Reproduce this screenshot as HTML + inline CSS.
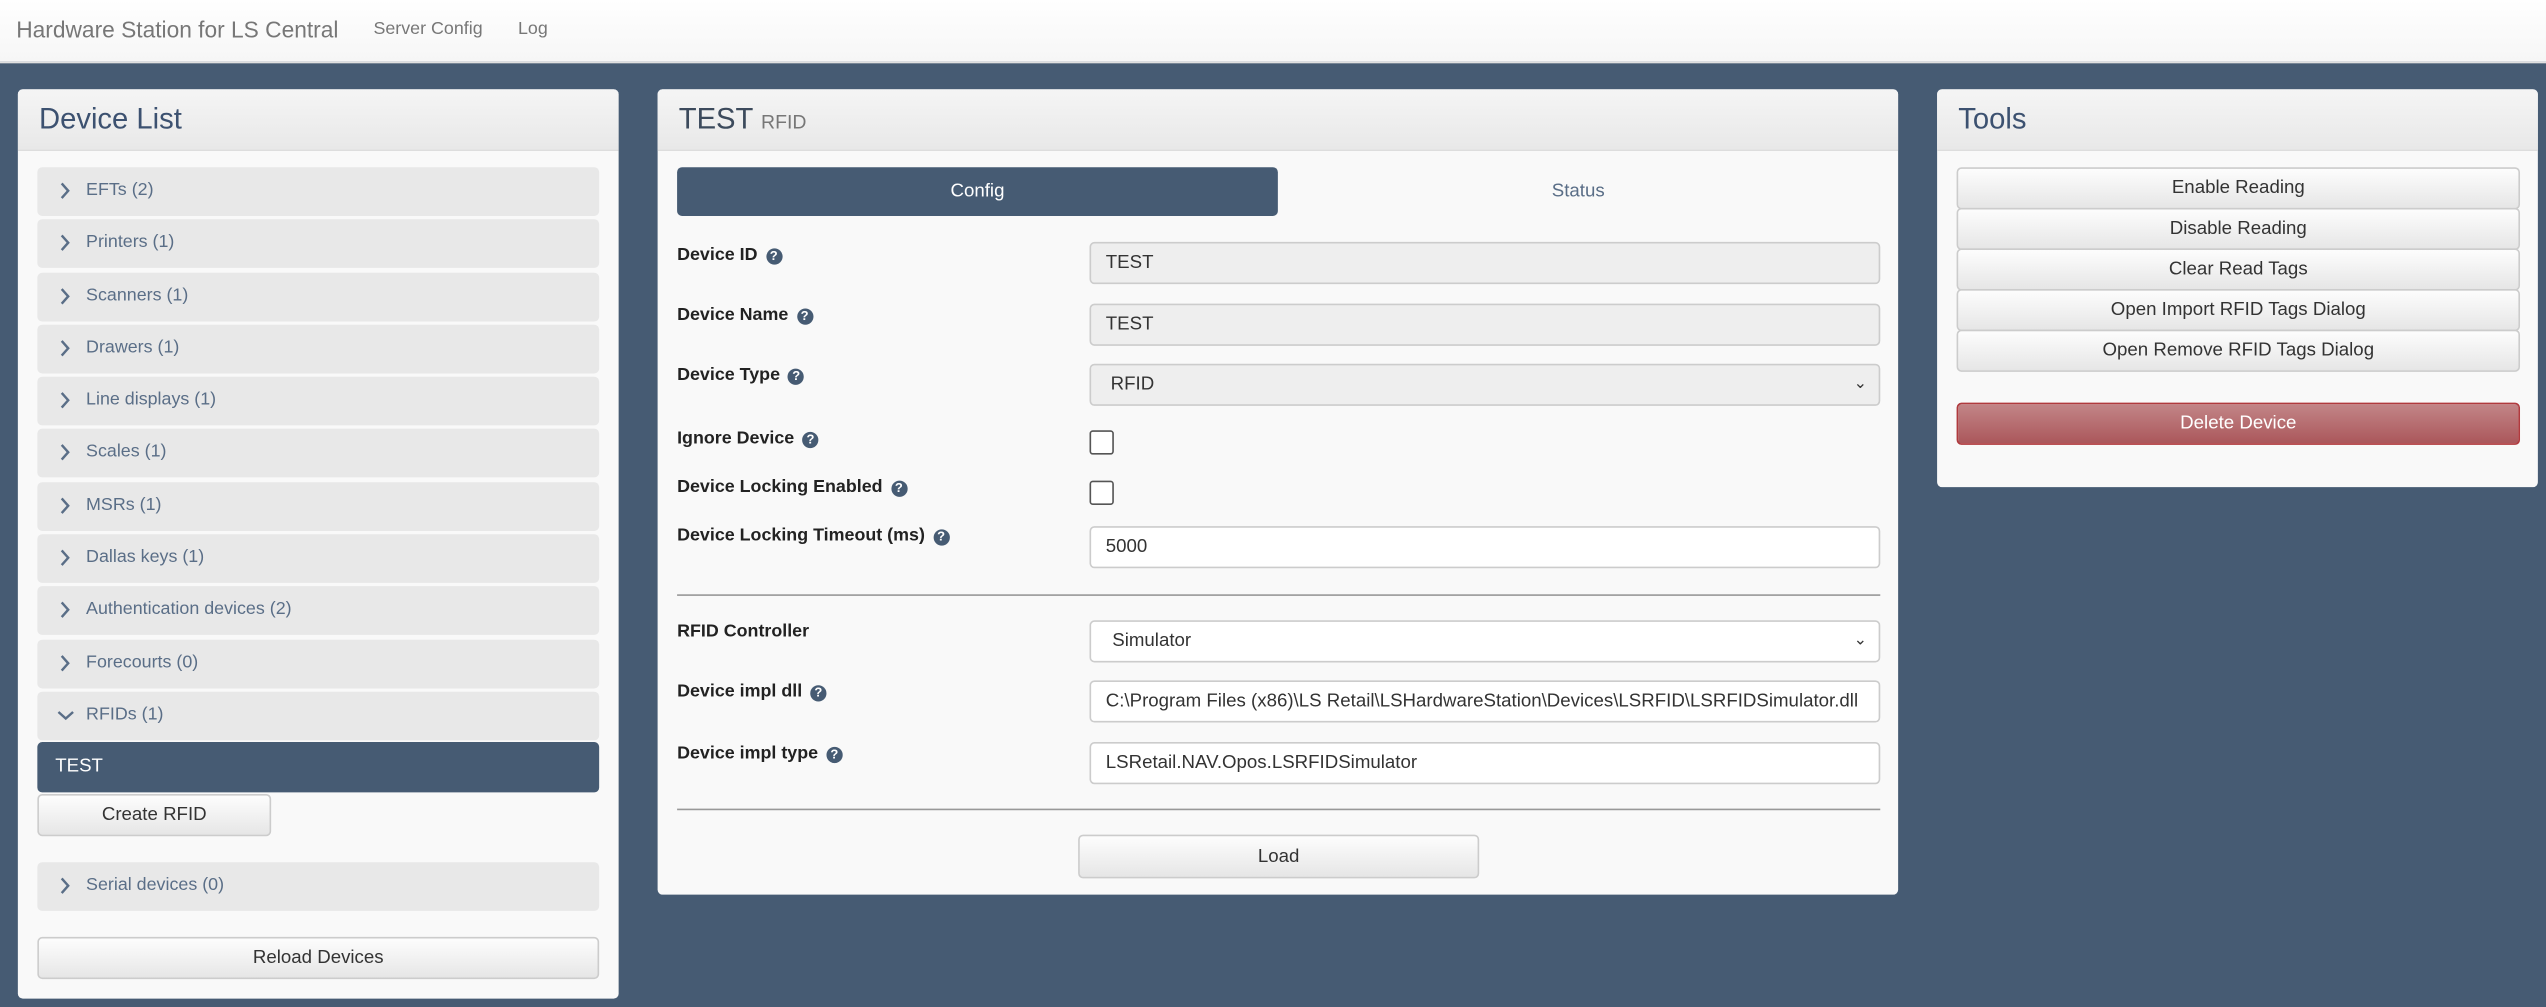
<!DOCTYPE html>
<html><head><meta charset="utf-8"><style>
html,body{margin:0;padding:0;width:2546px;height:1006px;overflow:hidden;background:#465b73;}
#w{position:absolute;left:0;top:0;width:1568px;height:620px;transform:scale(1.62372);transform-origin:0 0;font-family:"Liberation Sans",Arial,sans-serif;background:#465b73;}
.a{position:absolute;white-space:nowrap;}
.nav{left:0;top:0;width:1568px;height:38px;background:linear-gradient(#fff,#f6f6f6);border-bottom:1px solid #e0e0e0;}
.panel{background:#f9f9f9;border-radius:3px;}
.ph{position:absolute;left:0;top:0;right:0;height:37px;background:linear-gradient(#f5f5f5,#e8e8e8);border-bottom:1px solid #ddd;border-radius:3px 3px 0 0;}
.ph span{position:absolute;left:13px;top:8px;font-size:18px;color:#3c5170;}
.item{left:23px;width:346px;height:30px;background:#e8e8e8;border-radius:3px;font-size:11px;color:#5a6e87;}
.item .t{position:absolute;left:30px;top:8px;}
.item svg{position:absolute;left:13px;top:9px;}
.btn{background:linear-gradient(#fdfdfd,#e6e6e6);border:1px solid #ccc;border-radius:3px;box-sizing:border-box;font-size:11.5px;color:#333;text-align:center;}
.lbl{left:417px;font-size:11px;font-weight:bold;color:#222;}
.q{display:inline-block;width:10px;height:10px;border-radius:50%;background:#465b73;color:#fff;font-size:8px;line-height:10px;text-align:center;margin-left:5px;vertical-align:0px;}
.in{left:671px;width:487px;height:26px;box-sizing:border-box;border:1px solid #ccc;border-radius:3px;background:#fff;font-size:11.5px;color:#333;padding:6px 0 0 9px;overflow:hidden;}
.dis{background:#eee;}
.cb{left:671px;width:15px;height:15px;box-sizing:border-box;border:1px solid #555;border-radius:2px;background:#fff;}
.car{position:absolute;right:7px;top:6px;font-size:10px;}
</style></head><body><div id="w">
<div class="a nav"></div>
<div class="a" style="left:10px;top:10px;font-size:14px;color:#777">Hardware Station for LS Central</div>
<div class="a" style="left:230px;top:12px;font-size:11px;color:#777">Server Config</div>
<div class="a" style="left:319px;top:12px;font-size:11px;color:#777">Log</div>

<div class="a panel" style="left:11px;top:55px;width:370px;height:560px"><div class="ph"><span>Device List</span></div></div>
<div class="a item" style="top:103px"><svg width="8" height="11"><path d="M2 1l4 4.5L2 10" fill="none" stroke="#5a6e87" stroke-width="1.5"/></svg><span class="t">EFTs (2)</span></div>
<div class="a item" style="top:135px"><svg width="8" height="11"><path d="M2 1l4 4.5L2 10" fill="none" stroke="#5a6e87" stroke-width="1.5"/></svg><span class="t">Printers (1)</span></div>
<div class="a item" style="top:168px"><svg width="8" height="11"><path d="M2 1l4 4.5L2 10" fill="none" stroke="#5a6e87" stroke-width="1.5"/></svg><span class="t">Scanners (1)</span></div>
<div class="a item" style="top:200px"><svg width="8" height="11"><path d="M2 1l4 4.5L2 10" fill="none" stroke="#5a6e87" stroke-width="1.5"/></svg><span class="t">Drawers (1)</span></div>
<div class="a item" style="top:232px"><svg width="8" height="11"><path d="M2 1l4 4.5L2 10" fill="none" stroke="#5a6e87" stroke-width="1.5"/></svg><span class="t">Line displays (1)</span></div>
<div class="a item" style="top:264px"><svg width="8" height="11"><path d="M2 1l4 4.5L2 10" fill="none" stroke="#5a6e87" stroke-width="1.5"/></svg><span class="t">Scales (1)</span></div>
<div class="a item" style="top:297px"><svg width="8" height="11"><path d="M2 1l4 4.5L2 10" fill="none" stroke="#5a6e87" stroke-width="1.5"/></svg><span class="t">MSRs (1)</span></div>
<div class="a item" style="top:329px"><svg width="8" height="11"><path d="M2 1l4 4.5L2 10" fill="none" stroke="#5a6e87" stroke-width="1.5"/></svg><span class="t">Dallas keys (1)</span></div>
<div class="a item" style="top:361px"><svg width="8" height="11"><path d="M2 1l4 4.5L2 10" fill="none" stroke="#5a6e87" stroke-width="1.5"/></svg><span class="t">Authentication devices (2)</span></div>
<div class="a item" style="top:394px"><svg width="8" height="11"><path d="M2 1l4 4.5L2 10" fill="none" stroke="#5a6e87" stroke-width="1.5"/></svg><span class="t">Forecourts (0)</span></div>
<div class="a item" style="top:426px"><svg width="11" height="8" style="left:12px;top:11px"><path d="M1 1.5l4.5 4 4.5-4" fill="none" stroke="#5a6e87" stroke-width="1.5"/></svg><span class="t">RFIDs (1)</span></div>
<div class="a" style="left:23px;top:457px;width:346px;height:31px;background:#465b73;border-radius:3px;color:#fff;font-size:11.5px"><span style="position:absolute;left:11px;top:9px">TEST</span></div>
<div class="a btn" style="left:23px;top:489px;width:144px;height:26px;padding-top:6px">Create RFID</div>
<div class="a item" style="top:531px"><svg width="8" height="11"><path d="M2 1l4 4.5L2 10" fill="none" stroke="#5a6e87" stroke-width="1.5"/></svg><span class="t">Serial devices (0)</span></div>
<div class="a btn" style="left:23px;top:577px;width:346px;height:26px;padding-top:6px">Reload Devices</div>

<div class="a panel" style="left:405px;top:55px;width:764px;height:496px"><div class="ph"><span style="color:#3c4a5c">TEST <small style="font-size:12px;color:#777">RFID</small></span></div></div>
<div class="a" style="left:417px;top:103px;width:370px;height:30px;background:#465b73;border-radius:3px;color:#fff;font-size:11.5px;text-align:center;line-height:30px">Config</div>
<div class="a" style="left:787px;top:103px;width:370px;height:30px;color:#5a6e87;font-size:11.5px;text-align:center;line-height:30px">Status</div>

<div class="a lbl" style="top:151px">Device ID<span class="q">?</span></div>
<div class="a in dis" style="top:149px">TEST</div>
<div class="a lbl" style="top:188px">Device Name<span class="q">?</span></div>
<div class="a in dis" style="top:187px">TEST</div>
<div class="a lbl" style="top:225px">Device Type<span class="q">?</span></div>
<div class="a in dis" style="top:224px;padding-left:12px">RFID<span class="car">&#8964;</span></div>
<div class="a lbl" style="top:264px">Ignore Device<span class="q">?</span></div>
<div class="a cb" style="top:265px"></div>
<div class="a lbl" style="top:294px">Device Locking Enabled<span class="q">?</span></div>
<div class="a cb" style="top:296px"></div>
<div class="a lbl" style="top:324px">Device Locking Timeout (ms)<span class="q">?</span></div>
<div class="a in" style="top:324px">5000</div>
<div class="a" style="left:417px;top:366px;width:741px;height:1px;background:#999"></div>
<div class="a lbl" style="top:383px">RFID Controller</div>
<div class="a in" style="top:382px;padding-left:13px">Simulator<span class="car">&#8964;</span></div>
<div class="a lbl" style="top:420px">Device impl dll<span class="q">?</span></div>
<div class="a in" style="top:419px">C:\Program Files (x86)\LS Retail\LSHardwareStation\Devices\LSRFID\LSRFIDSimulator.dll</div>
<div class="a lbl" style="top:458px">Device impl type<span class="q">?</span></div>
<div class="a in" style="top:457px">LSRetail.NAV.Opos.LSRFIDSimulator</div>
<div class="a" style="left:417px;top:498px;width:741px;height:1px;background:#999"></div>
<div class="a btn" style="left:664px;top:514px;width:247px;height:27px;padding-top:7px">Load</div>

<div class="a panel" style="left:1193px;top:55px;width:370px;height:245px"><div class="ph"><span>Tools</span></div></div>
<div class="a btn" style="left:1205px;top:103px;width:347px;height:26px;padding-top:6px">Enable Reading</div>
<div class="a btn" style="left:1205px;top:128px;width:347px;height:26px;padding-top:6px">Disable Reading</div>
<div class="a btn" style="left:1205px;top:153px;width:347px;height:26px;padding-top:6px">Clear Read Tags</div>
<div class="a btn" style="left:1205px;top:178px;width:347px;height:26px;padding-top:6px">Open Import RFID Tags Dialog</div>
<div class="a btn" style="left:1205px;top:203px;width:347px;height:26px;padding-top:6px">Open Remove RFID Tags Dialog</div>
<div class="a" style="left:1205px;top:248px;width:347px;height:26px;box-sizing:border-box;border:1px solid #b03a3e;border-radius:3px;background:linear-gradient(#c28587,#ab575b);color:#fff;font-size:11.5px;text-align:center;padding-top:6px">Delete Device</div>
</div></body></html>
